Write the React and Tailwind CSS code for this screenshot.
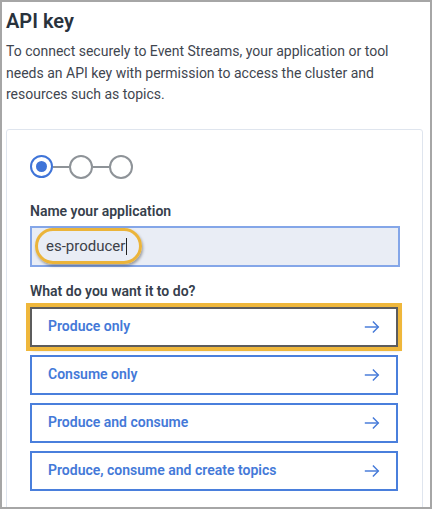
import React from 'react';

const ArrowIcon = () => (
    <svg width="18" height="18" viewBox="0 0 20 20" fill="none" stroke="currentColor" strokeWidth="1.6">
        <path d="M2 10h15" />
        <path d="M11 4l6 6-6 6" />
    </svg>
);

const actions = ['Produce only', 'Consume only', 'Produce and consume', 'Produce, consume and create topics'];

const Stepper = () => (
    <div className="flex items-center">
        <div className="w-[23px] h-[23px] rounded-full border-2 border-[#3f74d8] flex items-center justify-center">
            <div className="w-[11px] h-[11px] rounded-full bg-[#3f74d8]" />
        </div>
        <div className="w-[16px] h-[2px] bg-[#8e9398]" />
        <div className="w-[24px] h-[24px] rounded-full border-2 border-[#8e9398]" />
        <div className="w-[16px] h-[2px] bg-[#8e9398]" />
        <div className="w-[24px] h-[24px] rounded-full border-2 border-[#8e9398]" />
    </div>
);

export default function App() {
    return (
        <div
            className="w-[432px] h-[509px] border-2 border-[#a6a6a6] bg-white overflow-hidden pl-[4px] pr-[7px]"
            style={{ fontFamily: 'Roboto, "Liberation Sans", sans-serif' }}
        >
            <h1 className="pt-[5px] text-[20px] leading-[28px] font-semibold text-[#29323c]">API key</h1>
            <p className="mt-[6px] text-[14px] leading-[21.5px] text-[#3f4650]">
                To connect securely to Event Streams, your application or tool needs an API key with permission to access the cluster and resources such as topics.
            </p>

            <div className="mt-[23px] h-[400px] border border-[#dfe5ee] rounded-[3px] px-[23px] pt-[25px]">
                <Stepper />

                <div className="mt-[22px] text-[14px] leading-[20px] font-semibold text-[#36404c]">Name your application</div>
                <div className="mt-[5px] h-[41px] w-[370px] border-2 border-[#84a6e8] bg-[#e9edf5] flex items-center pl-[3px]">
                    <div className="h-[36px] w-[107px] rounded-full border-[3px] border-[#ebb43a] shadow-[1px_2px_3px_rgba(0,0,0,0.35)] flex items-center pl-[8px] text-[15px] text-[#3c4148]">
                        es-producer<span className="ml-[1px] inline-block w-[1px] h-[17px] bg-[#222]" />
                    </div>
                </div>

                <div className="mt-[14px] text-[14px] leading-[20px] font-semibold text-[#36404c]">What do you want it to do?</div>

                <div className="mt-[6px] flex flex-col gap-[8px] w-[368px]">
                    {actions.map((label, i) => (
                        <div
                            key={label}
                            className={
                                i === 0
                                    ? 'h-[40px] flex items-center justify-between pl-[16px] pr-[15px] bg-white border-2 border-[#5c5c5c] outline-4 outline-[#efb73b] shadow-[2px_3px_3px_rgba(0,0,0,0.3)] text-[#4479d8]'
                                    : 'h-[40px] flex items-center justify-between pl-[16px] pr-[15px] bg-white border-2 border-[#4a7fdc] text-[#4479d8]'
                            }
                        >
                            <span className="text-[14px] font-semibold">{label}</span>
                            <ArrowIcon />
                        </div>
                    ))}
                </div>
            </div>
        </div>
    );
}
